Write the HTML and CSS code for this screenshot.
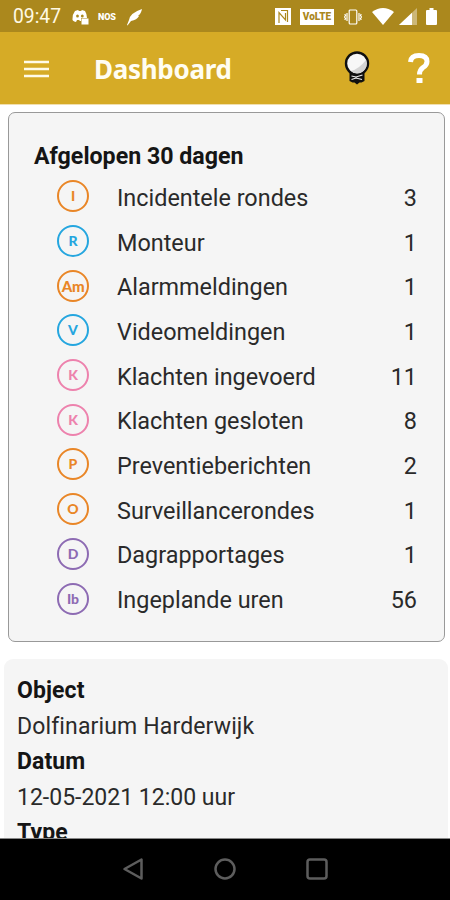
FILE: index.html
```html
<!DOCTYPE html>
<html lang="nl">
<head>
<meta charset="utf-8">
<title>Dashboard</title>
<link rel="stylesheet" href="styles.css">
</head>
<body>
<div class="phone">
  <header class="status">
    <span class="clock">09:47</span>
    <svg class="discord" width="18" height="16" viewBox="0 0 18 16"><path fill="#fff" d="M3 2 L6 1 L7 2 H9 L10 1 L13 2 Q15 5 15 9 H9 V12 H8 L7 11 L5 11 L4 13 Q0 12 .5 10 Q.5 5 3 2Z"/><ellipse cx="5.500" cy="7" rx="1.400" ry="1.600" fill="#ab881d"/><ellipse cx="10.300" cy="7" rx="1.400" ry="1.600" fill="#ab881d"/><rect x="9.500" y="9.500" width="7" height="6" fill="#fff"/></svg>
    <span class="nos">NOS</span>
    <svg class="feather" width="17" height="18" viewBox="0 0 17 18"><path fill="#fff" d="M1 17 L3 12 Q4 5 16 1 Q15 6 12 8 L13 8 Q11 12 5 13 L1.500 17.500Z"/></svg>
    <span class="grow"></span>
    <svg class="nfc" width="16" height="17" viewBox="0 0 16 17"><path d="M0 0H16V17H0Z" fill="#fff"/><path d="M4 15V4.500L10.500 12V5M6 2.500H12.500V14" fill="none" stroke="#ab881d" stroke-width="1.200"/></svg>
    <span class="volte">VoLTE</span>
    <svg class="vibrate" width="18" height="16" viewBox="0 0 18 16" fill="none" stroke="#fff" stroke-width="1.200"><rect x="5.200" y="1" width="7.600" height="14" rx="1"/><path d="M3 4V12M15 4V12M.8 5L1.500 6.500L.5 8L1.500 9.500L.8 11M17.200 5L16.500 6.500L17.500 8L16.500 9.500L17.200 11"/></svg>
    <svg class="wifi" width="22" height="17" viewBox="0 0 22 17"><path fill="#fff" d="M0 4 Q11 -4 22 4 L11 17Z"/></svg>
    <svg class="signal" width="18" height="17" viewBox="0 0 18 17"><path fill="#fff" opacity=".4" d="M0 17L18 0V17Z"/><path fill="#fff" d="M0 17L13 4.700V17Z"/></svg>
    <svg class="battery" width="11" height="17" viewBox="0 0 11 17"><path fill="#fff" d="M1 2H3.500V0H7.500V2H10Q11 2 11 3V16Q11 17 10 17H1Q0 17 0 16V3Q0 2 1 2Z"/></svg>
  </header>
  <nav class="toolbar">
    <svg class="menu" width="25" height="18" viewBox="0 0 25 18"><path d="M0 2H25M0 9H25M0 16H25" stroke="#fffbe8" stroke-width="2.500"/></svg>
    <h1>Dashboard</h1>
    <svg class="bulb" width="26" height="34" viewBox="0 0 26 34"><path fill="#101010" d="M5.500 20H20.500V30L17.500 31.500H15.500L13 33.500L10.500 31.500H8.500L5.500 30Z"/><circle cx="13" cy="12.500" r="11" fill="#f7f7f7" stroke="#101010" stroke-width="2.400"/><path fill="#d4d4d4" d="M22 9A9.500 9.500 0 0 1 7 20Q15 18 22 9Z"/><path d="M7.500 25L12 26L18.500 24M7.500 28.500L12 27L18 28.500" fill="none" stroke="#eee" stroke-width="1.200"/></svg>
    <svg class="help" width="24" height="32" viewBox="0 0 24 32"><path d="M3.500 10Q4 3.500 12 3.500Q20 3.500 20 9.500Q20 13 16 15.500Q12.500 18 12.500 22.500" fill="none" stroke="#fff" stroke-width="5"/><rect x="9.500" y="26" width="6" height="5" fill="#fff"/></svg>
  </nav>
  <main>
    <section class="summary">
      <h2>Afgelopen 30 dagen</h2>
      <ul>
        <li><b class="badge orange">I</b><span>Incidentele rondes</span><em>3</em></li>
        <li><b class="badge blue">R</b><span>Monteur</span><em>1</em></li>
        <li><b class="badge orange wide">Am</b><span>Alarmmeldingen</span><em>1</em></li>
        <li><b class="badge blue">V</b><span>Videomeldingen</span><em>1</em></li>
        <li><b class="badge pink">K</b><span>Klachten ingevoerd</span><em>11</em></li>
        <li><b class="badge pink">K</b><span>Klachten gesloten</span><em>8</em></li>
        <li><b class="badge orange">P</b><span>Preventieberichten</span><em>2</em></li>
        <li><b class="badge orange">O</b><span>Surveillancerondes</span><em>1</em></li>
        <li><b class="badge purple">D</b><span>Dagrapportages</span><em>1</em></li>
        <li><b class="badge purple">Ib</b><span>Ingeplande uren</span><em>56</em></li>
      </ul>
    </section>
    <dl class="details">
      <dt>Object</dt><dd class="place">Dolfinarium Harderwijk</dd>
      <dt>Datum</dt><dd>12-05-2021 12:00 uur</dd>
      <dt>Type</dt>
    </dl>
  </main>
  <footer class="navbar">
    <svg width="22" height="24" viewBox="0 0 22 24"><path d="M19.500 2.500V21.500L2.500 12Z"/></svg>
    <svg width="22" height="24" viewBox="0 0 22 24"><circle cx="11" cy="12" r="9.500"/></svg>
    <svg width="22" height="24" viewBox="0 0 22 24"><rect x="1.500" y="2.500" width="19" height="19" rx="2.500"/></svg>
  </footer>
</div>
</body>
</html>
```
FILE: styles.css
```css
* { box-sizing: border-box; }
body, h1, h2, ul, dl, dd { margin: 0; padding: 0; }
body { font-family: Roboto, sans-serif; background: #fff; color: #2a2a2a; }
svg { display: block; flex: none; }

.phone { display: flex; flex-direction: column; width: 450px; height: 900px; overflow: hidden; }

.status { flex: none; display: flex; align-items: center; height: 32px; padding: 1px 13px 0; background: #ab881d; color: #fff; }
.clock { width: 48px; font-size: 19.300px; line-height: 30px; color: #fff9e4; white-space: nowrap; }
.discord { margin: 1px 0 0 11px; }
.nos { width: 20px; margin-left: 8px; font: 900 9px/12px Roboto, sans-serif; letter-spacing: -0.1px; }
.feather { margin-left: 8px; }
.grow { flex: 1; }
.nfc { margin-right: 9px; }
.volte { width: 34px; height: 16px; margin-right: 10px; background: #fff; color: #ab881d; font: 900 10px/16px Roboto, sans-serif; text-align: center; }
.vibrate { margin-right: 10px; }
.wifi { margin-right: 5px; }
.signal { margin-right: 9px; }

.toolbar { flex: none; display: flex; align-items: center; height: 73px; padding: 0 19px 0 24px; background: #d6ab26; border-bottom: 1px solid #f1dfae; }
.menu { margin-top: 1px; }
.toolbar h1 { flex: 1; margin: 1px 0 0 45px; font: 700 26px/36px "Noto Sans", sans-serif; letter-spacing: -0.3px; color: #fffdf2; }
.bulb { margin-right: 37px; }

main { flex: 1; min-height: 0; overflow: hidden; }
.summary { height: 530px; margin: 7px 5px 0 8px; padding: 29px 27px 0 25px; border: 1px solid #999; border-radius: 7px; background: #f5f5f5; }
.summary h2 { font-size: 23.200px; line-height: 28px; font-weight: 700; color: #151515; }
ul { list-style: none; margin-top: 5px; }
li { display: flex; align-items: center; height: 44.700px; margin-left: 23px; font-size: 23.400px; }
li span { flex: 1; margin: 1px 0 0 28px; }
li em { margin-top: 1px; font-style: normal; }
.badge { display: flex; align-items: center; justify-content: center; width: 32px; height: 32px; margin-top: -2px; border: 2px solid; border-radius: 50%; font: 900 14px/28px Lato, sans-serif; }
.wide { font-size: 15px; letter-spacing: -0.3px; }
.orange { color: #e98627; }
.blue { color: #25a6df; }
.pink { color: #ed82ad; }
.purple { color: #8d6bb3; }

.details { height: 240px; margin: 17px 2px 0 4px; padding: 14px 13px; border-radius: 9px; background: #f5f5f5; font-size: 23px; line-height: 35.600px; }
.details dt { font-weight: 700; color: #151515; letter-spacing: 0.1px; }
.place { letter-spacing: 0.14px; }

.navbar { flex: none; display: flex; justify-content: center; gap: 70px; height: 62px; padding-top: 18px; border-top: 1px solid #888; background: #000; }
.navbar svg { fill: none; stroke: #5d5d5d; stroke-width: 2.500; stroke-linejoin: round; }
```
